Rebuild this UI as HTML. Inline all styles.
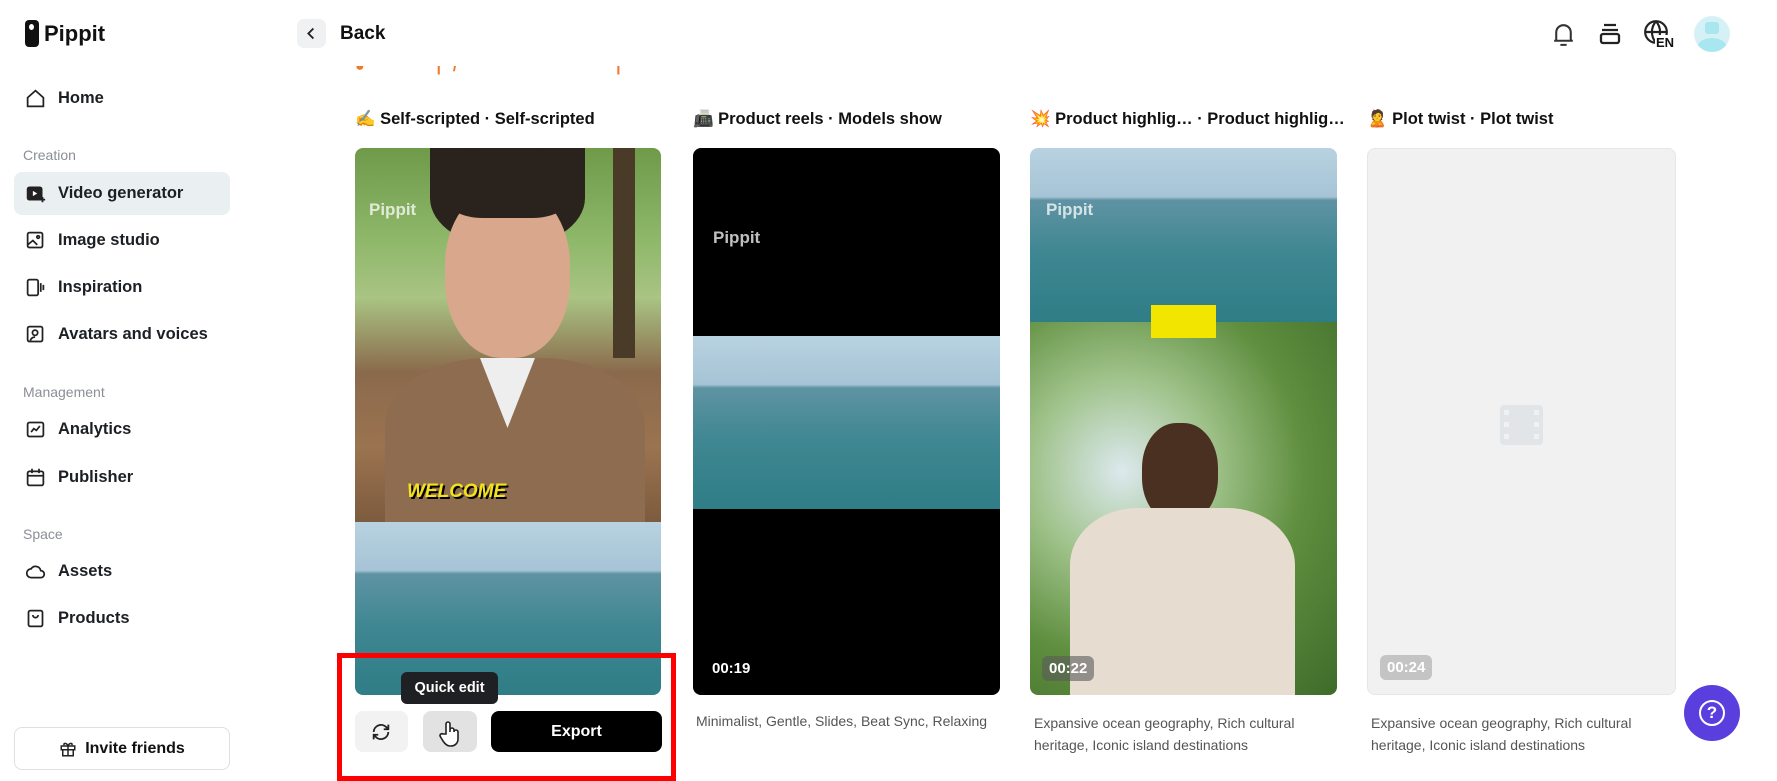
<!DOCTYPE html>
<html><head><meta charset="utf-8"><style>
*{box-sizing:border-box;margin:0;padding:0}
body{width:1777px;height:781px;overflow:hidden;background:#fff;font-family:"Liberation Sans",sans-serif;color:#111;position:relative}
.a{position:absolute}
.nav{position:absolute;left:25px;font-size:16.5px;font-weight:bold;color:#1c1f23;display:flex;align-items:center;gap:12px;height:24px}
.nav svg{width:21px;height:21px}
.sec{position:absolute;left:23px;font-size:14px;color:#8a8f96}
.title{position:absolute;top:110px;font-size:16.5px;font-weight:bold;white-space:nowrap}
.card{position:absolute;top:148px;height:547px;border-radius:8px;overflow:hidden}
.badge{position:absolute;left:12px;bottom:14px;padding:4px 7px;border-radius:6px;font-size:15px;font-weight:bold;color:#fff}
.desc{position:absolute;top:712px;font-size:14px;color:#555;line-height:22px}
.ocean{background:linear-gradient(#b8d2e0 0%,#a6c4d6 28%,#5f93a3 30%,#3f8792 60%,#2f7d86 100%)}
.wm{position:absolute;font-size:17px;font-weight:bold;color:rgba(255,255,255,.75)}
</style></head><body>
<div class="a" style="left:25px;top:20px;width:14px;height:27px;background:#111;border-radius:4px"></div>
<div class="a" style="left:29px;top:24px;width:5px;height:6px;background:#fff;border-radius:50%"></div>
<div class="a" style="left:44px;top:21px;font-size:22px;font-weight:bold">Pippit</div>

<div class="nav" style="top:86px"><svg viewBox="0 0 24 24" fill="none" stroke="#222" stroke-width="2"><path d="M3 11 12 3l9 8v10H3z"/></svg>Home</div>
<div class="sec" style="top:147px">Creation</div>
<div class="a" style="left:14px;top:172px;width:216px;height:43px;background:#eaeff2;border-radius:8px"></div>
<div class="nav" style="top:181px"><svg viewBox="0 0 24 24"><rect x="2" y="4" width="18" height="16" rx="3" fill="#222"/><path d="M9 9l5 3-5 3z" fill="#fff"/><path d="M20 16v6M17 19h6" stroke="#222" stroke-width="2"/></svg>Video generator</div>
<div class="nav" style="top:228px"><svg viewBox="0 0 24 24" fill="none" stroke="#222" stroke-width="2"><rect x="3" y="3" width="17" height="17" rx="2"/><path d="M3 17l6-5 5 5"/><circle cx="15" cy="8" r="1.5"/></svg>Image studio</div>
<div class="nav" style="top:275px"><svg viewBox="0 0 24 24" fill="none" stroke="#222" stroke-width="2"><rect x="3" y="3" width="12" height="18" rx="2"/><path d="M18 7v10M21 9v6"/></svg>Inspiration</div>
<div class="nav" style="top:322px"><svg viewBox="0 0 24 24" fill="none" stroke="#222" stroke-width="2"><rect x="3" y="3" width="17" height="17" rx="2"/><circle cx="11.5" cy="10" r="3"/><path d="M6 19c1-3 3-4 5.5-4"/></svg>Avatars and voices</div>
<div class="sec" style="top:384px">Management</div>
<div class="nav" style="top:417px"><svg viewBox="0 0 24 24" fill="none" stroke="#222" stroke-width="2"><rect x="3" y="4" width="18" height="16" rx="2"/><path d="M7 15l3-4 3 2 4-5"/></svg>Analytics</div>
<div class="nav" style="top:465px"><svg viewBox="0 0 24 24" fill="none" stroke="#222" stroke-width="2"><rect x="3" y="5" width="18" height="16" rx="2"/><path d="M3 10h18M8 2v5M16 2v5"/></svg>Publisher</div>
<div class="sec" style="top:526px">Space</div>
<div class="nav" style="top:559px"><svg viewBox="0 0 24 24" fill="none" stroke="#222" stroke-width="2"><path d="M7 19a5 5 0 0 1 0-10 6 6 0 0 1 11 2 4 4 0 0 1 0 8z"/></svg>Assets</div>
<div class="nav" style="top:606px"><svg viewBox="0 0 24 24" fill="none" stroke="#222" stroke-width="2"><rect x="4" y="3" width="16" height="18" rx="2"/><path d="M9 8a3 3 0 0 0 6 0"/></svg>Products</div>
<div class="a" style="left:14px;top:727px;width:216px;height:43px;border:1px solid #dcdfe3;border-radius:8px;display:flex;align-items:center;justify-content:center;gap:8px;font-size:16px;font-weight:bold"><svg width="18" height="18" viewBox="0 0 24 24" fill="none" stroke="#222" stroke-width="2"><rect x="3" y="8" width="18" height="5"/><path d="M5 13v8h14v-8M12 8v13M12 8c-2-5-7-4-5-1M12 8c2-5 7-4 5-1"/></svg>Invite friends</div>

<div class="a" style="left:297px;top:19px;width:29px;height:29px;background:#f0f1f2;border-radius:7px"></div>
<svg class="a" style="left:304px;top:26px" width="15" height="15" viewBox="0 0 24 24" fill="none" stroke="#222" stroke-width="3"><path d="M15 4l-8 8 8 8"/></svg>
<div class="a" style="left:340px;top:23px;font-size:19px;font-weight:bold">Back</div>
<svg class="a" style="left:1551px;top:21px" width="25" height="27" viewBox="0 0 24 26" fill="none" stroke="#333" stroke-width="2"><path d="M5 19V11a7 7 0 0 1 14 0v8M3 19h18M9 23h6"/></svg>
<svg class="a" style="left:1598px;top:22px" width="24" height="24" viewBox="0 0 24 24" fill="none" stroke="#222" stroke-width="2.3"><path d="M6 3h12M4 8h16"/><rect x="3" y="12" width="18" height="9" rx="2"/></svg>
<svg class="a" style="left:1643px;top:19px" width="26" height="26" viewBox="0 0 24 24" fill="none" stroke="#222" stroke-width="2"><circle cx="12" cy="12" r="10"/><path d="M2 12h20M12 2c-5 6-5 14 0 20M12 2c5 6 5 14 0 20"/></svg>
<div class="a" style="left:1655px;top:35px;font-size:13px;font-weight:bold;background:#fff;padding:0 1px">EN</div>
<div class="a" style="left:1694px;top:16px;width:36px;height:36px;border-radius:50%;background:#d6f1f6;overflow:hidden"><div class="a" style="left:11px;top:6px;width:14px;height:12px;background:#a8e6f0;border-radius:3px"></div><div class="a" style="left:3px;top:22px;width:30px;height:20px;background:#a8e6f0;border-radius:50%"></div></div>

<div class="a" style="left:355px;top:66px;width:350px;height:12px;overflow:hidden"><div style="margin-top:-8px;font-size:16px;color:#f07a2a;font-weight:bold;letter-spacing:1px">● &nbsp;&nbsp;&nbsp;&nbsp;&nbsp;&nbsp;&nbsp;&nbsp;&nbsp;&nbsp;&nbsp;&nbsp;| &nbsp;/ &nbsp;&nbsp;&nbsp;&nbsp;&nbsp;&nbsp;&nbsp;&nbsp;&nbsp;&nbsp;&nbsp;&nbsp;&nbsp;&nbsp;&nbsp;&nbsp;&nbsp;&nbsp;&nbsp;&nbsp;&nbsp;&nbsp;&nbsp;&nbsp;&nbsp;&nbsp;&nbsp;&nbsp;|</div></div>

<div class="title" style="left:355px">✍️ Self-scripted · Self-scripted</div>
<div class="title" style="left:693px">📠 Product reels · Models show</div>
<div class="title" style="left:1030px">💥 Product highlig… · Product highlig…</div>
<div class="title" style="left:1367px">🙎 Plot twist · Plot twist</div>

<div class="card" style="left:355px;width:306px">
 <div class="a" style="left:0;top:0;width:306px;height:374px;background:linear-gradient(180deg,#6f9a4a 0%,#8fb86a 25%,#a9c483 40%,#8a6a4c 60%,#9b7350 80%,#7d5b3e 100%)"></div>
 <div class="a" style="left:75px;top:0;width:155px;height:100px;background:#2a221c;border-radius:0 0 50% 50%"></div>
 <div class="a" style="left:90px;top:40px;width:125px;height:170px;background:#d9a88c;border-radius:45%"></div>
 <div class="a" style="left:90px;top:0;width:125px;height:70px;background:#2a221c;border-radius:40% 40% 30% 30%"></div>
 <div class="a" style="left:30px;top:210px;width:260px;height:170px;background:#8e6c4f;border-radius:40% 40% 0 0"></div>
 <div class="a" style="left:125px;top:210px;width:55px;height:70px;background:#eee;clip-path:polygon(0 0,100% 0,50% 100%)"></div>
 <div class="a" style="left:258px;top:0;width:22px;height:210px;background:#4a3a28"></div>
 <div class="wm" style="left:14px;top:52px">Pippit</div>
 <div class="a" style="left:52px;top:333px;font-size:19px;font-weight:900;font-style:italic;color:#f3e11d;text-shadow:2px 2px 0 #000">WELCOME</div>
 <div class="a ocean" style="left:0;top:374px;width:306px;height:173px"></div>
</div>
<div class="card" style="left:693px;width:307px;background:#000">
 <div class="a ocean" style="left:0;top:188px;width:307px;height:173px"></div>
 <div class="wm" style="left:20px;top:80px">Pippit</div>
 <div class="badge" style="left:12px">00:19</div>
</div>
<div class="card" style="left:1030px;width:307px">
 <div class="a ocean" style="left:0;top:0;width:307px;height:174px"></div>
 <div class="wm" style="left:16px;top:52px">Pippit</div>
 <div class="a" style="left:0;top:174px;width:307px;height:373px;background:radial-gradient(ellipse at 30% 40%,#dce9ee 0%,#9fc28a 30%,#5e8e3e 60%,#3f6b2a 100%)"></div>
 <div class="a" style="left:121px;top:157px;width:65px;height:33px;background:#f2e600"></div>
 <div class="a" style="left:112px;top:275px;width:76px;height:100px;background:#4a3020;border-radius:45%"></div>
 <div class="a" style="left:40px;top:360px;width:225px;height:190px;background:#e6ddd0;border-radius:30% 30% 0 0"></div>
 <div class="badge" style="background:rgba(90,90,90,.6)">00:22</div>
</div>
<div class="card" style="left:1367px;width:309px;background:#f1f1f1;border:1px solid #e6e6e6">
 <svg class="a" style="left:132px;top:256px" width="43" height="40" viewBox="0 0 43 40"><rect width="43" height="40" rx="4" fill="#e2e5e8"/><g fill="#f1f1f1"><rect x="4" y="5" width="5" height="5"/><rect x="4" y="17" width="5" height="5"/><rect x="4" y="29" width="5" height="5"/><rect x="34" y="5" width="5" height="5"/><rect x="34" y="17" width="5" height="5"/><rect x="34" y="29" width="5" height="5"/></g></svg>
 <div class="badge" style="background:#c4c4c4">00:24</div>
</div>

<div class="desc" style="left:696px;top:710px">Minimalist, Gentle, Slides, Beat Sync, Relaxing</div>
<div class="desc" style="left:1034px">Expansive ocean geography, Rich cultural<br>heritage, Iconic island destinations</div>
<div class="desc" style="left:1371px">Expansive ocean geography, Rich cultural<br>heritage, Iconic island destinations</div>

<div class="a" style="left:355px;top:711px;width:53px;height:41px;background:#f2f2f2;border-radius:8px"></div>
<svg class="a" style="left:370px;top:721px" width="22" height="22" viewBox="0 0 24 24" fill="none" stroke="#222" stroke-width="2"><path d="M4 12a8 8 0 0 1 14-5l2 2M20 12a8 8 0 0 1-14 5l-2-2M20 4v5h-5M4 20v-5h5"/></svg>
<div class="a" style="left:423px;top:711px;width:54px;height:41px;background:#e2e2e2;border-radius:8px"></div>
<svg class="a" style="left:438px;top:720px" width="24" height="28" viewBox="0 0 24 28" fill="#fff" stroke="#222" stroke-width="1.6"><path d="M8 14V4a2 2 0 0 1 4 0v8 -2a2 2 0 0 1 4 0v2a2 2 0 0 1 4 0v7c0 4-3 7-7 7h-1c-3 0-5-2-7-5l-3-5a2 2 0 0 1 3-2z"/></svg>
<div class="a" style="left:491px;top:711px;width:171px;height:41px;background:#000;border-radius:8px;color:#fff;font-weight:bold;font-size:16px;display:flex;align-items:center;justify-content:center">Export</div>
<div class="a" style="left:401px;top:672px;width:97px;height:32px;background:#1f2023;border-radius:6px;color:#fff;font-weight:bold;font-size:14.5px;display:flex;align-items:center;justify-content:center">Quick edit</div>
<div class="a" style="left:337px;top:653px;width:339px;height:128px;border:5px solid #f00;border-bottom:none"></div>
<div class="a" style="left:337px;top:776px;width:339px;height:5px;background:#f00"></div>

<div class="a" style="left:1684px;top:685px;width:56px;height:56px;border-radius:50%;background:#5b3fde;display:flex;align-items:center;justify-content:center"><div style="width:26px;height:26px;border:2.5px solid #fff;border-radius:50%;color:#fff;font-size:17px;font-weight:bold;text-align:center;line-height:21px">?</div></div>
</body></html>
